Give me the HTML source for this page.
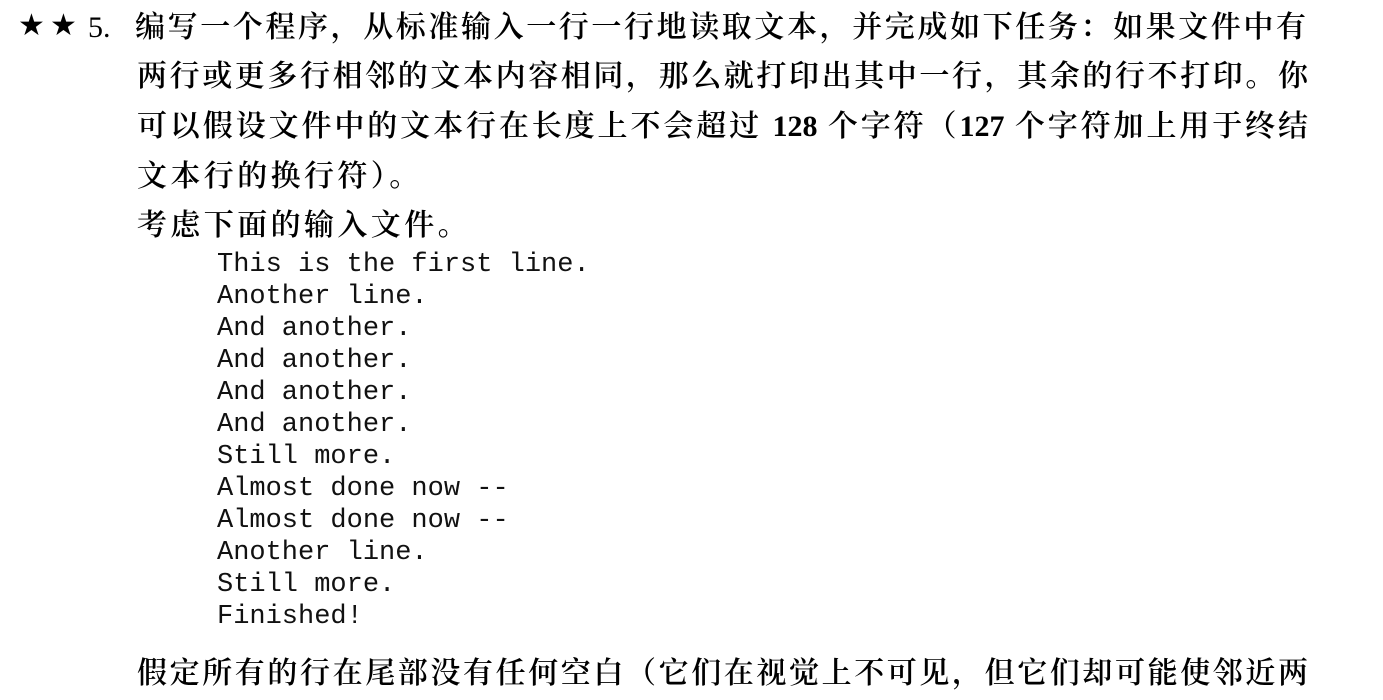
<!DOCTYPE html>
<html><head><meta charset="utf-8"><style>
body{margin:0;width:1383px;height:700px;background:#fff;position:relative;overflow:hidden;color:#000}
.l{position:absolute;font-family:"Liberation Serif","Noto Serif CJK SC",serif;font-weight:600;font-size:30px;line-height:40px;white-space:nowrap;letter-spacing:3.4px}
.j{width:1171px;text-align:justify;text-align-last:justify;white-space:normal;letter-spacing:0}
.c{position:absolute;left:217px;font-family:"Liberation Mono",monospace;font-size:27px;line-height:32px;white-space:pre;color:#111}
.s{position:absolute;font-size:30px;line-height:40px;top:6px;font-family:"DejaVu Sans",sans-serif}
</style></head><body>
<div class="s" style="left:18px">★</div><div class="s" style="left:50px">★</div>
<div class="l" style="left:88px;top:8px;letter-spacing:0;font-weight:400">5.</div>
<div class="l j" style="left:135px;top:8px">编写一个程序，从标准输入一行一行地读取文本，并完成如下任务：如果文件中有</div>
<div class="l j" style="left:137px;top:57px">两行或更多行相邻的文本内容相同，那么就打印出其中一行，其余的行不打印。你</div>
<div class="l j" style="left:137px;top:107px">可以假设文件中的文本行在长度上不会超过 <b>128</b> 个字符（<b>127</b> 个字符加上用于终结</div>
<div class="l" style="left:137px;top:157px">文本行的换行符）。</div>
<div class="l" style="left:137px;top:206px">考虑下面的输入文件。</div>
<div class="c" style="top:249px">This is the first line.
Another line.
And another.
And another.
And another.
And another.
Still more.
Almost done now --
Almost done now --
Another line.
Still more.
Finished!</div>
<div class="l j" style="left:137px;top:654px">假定所有的行在尾部没有任何空白（它们在视觉上不可见，但它们却可能使邻近两</div>
</body></html>
